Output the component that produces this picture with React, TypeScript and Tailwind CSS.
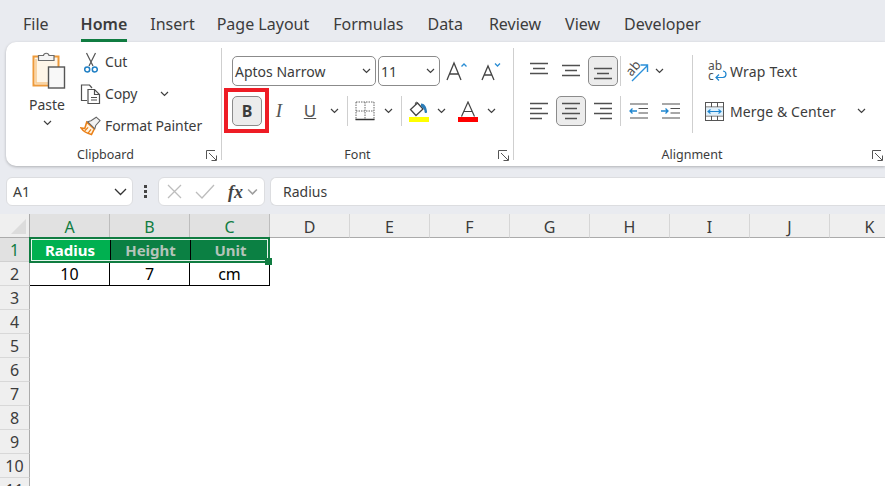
import React from 'react';

const tabs = ['File', 'Home', 'Insert', 'Page Layout', 'Formulas', 'Data', 'Review', 'View', 'Developer'];
const tabGaps: Record<string, string> = {
  File: 'mr-[32px]',
  Home: 'mr-[23px]',
  Insert: 'mr-[22px]',
  Data: 'mr-[26px]',
};
const columns = ['A', 'B', 'C', 'D', 'E', 'F', 'G', 'H', 'I', 'J', 'K'];
const rows = [3, 4, 5, 6, 7, 8, 9, 10, 11];

function Chevron({ className = '' }: { className?: string }) {
  return (
    <svg width="9" height="6" viewBox="0 0 9 6" className={`shrink-0 ${className}`} fill="none" stroke="#3f3f3f" strokeWidth="1.2">
      <path d="M1 1l3.5 3.5L8 1" />
    </svg>
  );
}

function Launcher() {
  return (
    <svg width="11" height="11" viewBox="0 0 11 11" fill="none" stroke="#555" strokeWidth="1">
      <path d="M.5 9V.5H9" />
      <path d="M3 3l7 7M10.5 5.5v5h-5" />
    </svg>
  );
}

function GroupFooter({ label, labelClass, launcherClass }: { label: string; labelClass: string; launcherClass: string }) {
  return (
    <div className="mt-auto grid h-[14px] grid-cols-[1fr_auto_1fr] items-center text-[12.5px] leading-[14px] text-[#3c3c3c]">
      <span />
      <span className={`pt-[2px] ${labelClass}`}>{label}</span>
      <span className={`flex justify-end pt-[2px] ${launcherClass}`}>
        <Launcher />
      </span>
    </div>
  );
}

function PasteIcon() {
  return (
    <svg width="36" height="40" viewBox="0 0 36 40">
      <rect x="2.5" y="6.5" width="25" height="29" fill="#fff6e8" stroke="#ee9a3a" strokeWidth="2" />
      <path d="M5 9v24h20" fill="none" stroke="#f7c98d" strokeWidth="1.5" />
      <path d="M7.5 10.5V5.5h5c.5-3 5-3 5.5 0h5v5z" fill="#f5f5f5" stroke="#6b6b6b" strokeWidth="1.2" />
      <rect x="17.5" y="17" width="16" height="21" fill="#f8f8f8" stroke="#555" strokeWidth="1.4" />
    </svg>
  );
}

function ScissorsIcon() {
  return (
    <svg width="14" height="21" viewBox="0 0 14 21" fill="none">
      <path d="M2.5 1l6.500 13M11.500 1L5 14" stroke="#555" strokeWidth="1.2" />
      <circle cx="3.2" cy="17.5" r="2.5" stroke="#1f7fc4" strokeWidth="1.5" />
      <circle cx="10.8" cy="17.5" r="2.5" stroke="#1f7fc4" strokeWidth="1.5" />
    </svg>
  );
}

function CopyIcon() {
  return (
    <svg width="21" height="20" viewBox="0 0 21 20" fill="none" stroke="#505050" strokeWidth="1.2">
      <path d="M7 16.500H1.500V1h8l2.500 3" />
      <path d="M8 5.500h6.500l5 5v9H8z" fill="#fff" />
      <path d="M14.500 5.500v5h5M11 13.500h6M11 16h6" />
    </svg>
  );
}

function PainterIcon() {
  return (
    <svg width="22" height="20" viewBox="0 0 22 20" fill="none">
      <path d="M7 6l8 7-3 6C8 18 3 15 1 12l4 .5z" fill="#fff3e0" stroke="#ea7f16" strokeWidth="1.6" />
      <path d="M5 15l3.500-3.500M8.500 17.500l3-4" stroke="#ea7f16" strokeWidth="1.3" />
      <path d="M8 5.500l3.500-1L17 .8l4 3.500-4.500 5.200-1 3.500z" fill="#f2f2f2" stroke="#666" strokeWidth="1.1" />
    </svg>
  );
}

function GrowIcon({ up }: { up: boolean }) {
  return (
    <svg width="22" height="20" viewBox="0 0 22 20" fill="none">
      <path d={up ? 'M1 19L8 2l7 17M3.500 13h9' : 'M3 19L9 5l6 14M5 14h8'} stroke="#444" strokeWidth="1.3" />
      <path d={up ? 'M15.500 5.500L18 3l2.500 2.500' : 'M16 2.500L18.500 5 21 2.500'} stroke="#2a8dd4" strokeWidth="1.3" />
    </svg>
  );
}

function BordersIcon() {
  return (
    <svg width="20" height="20" viewBox="0 0 20 20" fill="none">
      <path d="M1 1h18M1 1v18M19 1v18M10 1v18M1 10h18" stroke="#666" strokeWidth="1" strokeDasharray="1.5 1" />
      <path d="M.5 18.500h19" stroke="#333" strokeWidth="1.5" />
    </svg>
  );
}

function FillIcon() {
  return (
    <div className="flex w-[21px] flex-col items-center">
      <svg width="20" height="16" viewBox="0 0 20 16" fill="none">
        <path d="M8.500 2L1.500 8.500l5.500 6 7-6.500z" fill="#fff" stroke="#444" strokeWidth="1.3" />
        <path d="M8.500 2C7.500 .5 6 1 6.500 4" stroke="#444" strokeWidth="1" />
        <path d="M12 2.500c3.500 0 5.500 3 6 8 .3 2-2.500 2-2.500 0 0-1.500-.5-3-3.500-5z" fill="#2b7cb8" />
      </svg>
      <span className="h-[5px] w-[20px] bg-[#ffff00]" />
    </div>
  );
}

function ColorAIcon() {
  return (
    <div className="flex w-[20px] flex-col items-center">
      <svg width="16" height="16" viewBox="0 0 16 16" fill="none">
        <path d="M1.500 15.500L8 1l6.500 14.500M4 10.500h8" stroke="#444" strokeWidth="1.2" />
      </svg>
      <span className="h-[5px] w-[20px] bg-[#ff0000]" />
    </div>
  );
}

function LinesIcon({ align }: { align: 'left' | 'center' | 'right' | 'top' | 'middle' | 'bottom' }) {
  const d = {
    left: 'M0 1.500h18M0 6.500h12M0 11.500h18M0 16.500h12',
    center: 'M0 1.500h18M3 6.500h12M0 11.500h18M3 16.500h12',
    right: 'M0 1.500h18M6 6.500h12M0 11.500h18M6 16.500h12',
    top: 'M0 1.500h18M3 6.500h12M0 11.500h18',
    middle: 'M0 3.500h18M3 8.500h12M0 13.500h18',
    bottom: 'M0 6.500h18M3 11.500h12M0 16.500h18',
  }[align];
  return (
    <svg width="18" height="18" viewBox="0 0 18 18" fill="none" stroke="#505050" strokeWidth="1.3">
      <path d={d} />
    </svg>
  );
}

function OrientationIcon() {
  return (
    <svg width="24" height="24" viewBox="0 0 24 24" fill="none">
      <text x="1" y="14" transform="rotate(-50 8 10)" fontSize="13" fill="#505050" fontFamily="'Noto Sans', sans-serif">ab</text>
      <path d="M7 22L22 7M15.500 6H22.500v7" stroke="#2b90d9" strokeWidth="1.4" />
    </svg>
  );
}

function IndentIcon({ increase }: { increase: boolean }) {
  return (
    <svg width="19" height="16" viewBox="0 0 19 16" fill="none">
      <path d="M1 1h18M9.500 5.500H19M9.500 10H19M1 15h18" stroke="#505050" strokeWidth="1.2" />
      <path d={increase ? 'M0 8h7M4.500 5.500L7 8l-2.500 2.500' : 'M1 8h7M3.500 5.500L1 8l2.500 2.500'} stroke="#1f86d0" strokeWidth="1.3" />
    </svg>
  );
}

function WrapIcon() {
  return (
    <div className="relative flex h-[20px] w-[19px] flex-col text-[12px] text-[#505050]">
      <span className="h-[10px] leading-[10px]">ab</span>
      <span className="h-[10px] leading-[10px]">c</span>
      <svg className="absolute bottom-0 right-0" width="13" height="11" viewBox="0 0 13 11" fill="none" stroke="#1f86d0" strokeWidth="1.2">
        <path d="M9 1c4 .5 4 6 0 6.500H2M5 4.500L2 7.500l3 3" />
      </svg>
    </div>
  );
}

function MergeIcon() {
  return (
    <svg width="19" height="19" viewBox="0 0 19 19" fill="none">
      <rect x=".5" y=".5" width="18" height="18" fill="#fff" stroke="#555" />
      <path d="M.5 5h18M.5 14h18M6.500 .5V5M12.500 .5V5M6.500 14v4.500M12.500 14v4.500" stroke="#555" />
      <rect x="1" y="5.500" width="17" height="8" fill="#dff0fb" />
      <path d="M3 9.500h13M5.500 7.500l-2.500 2 2.500 2M13.500 7.500l2.500 2-2.500 2" stroke="#1f86d0" strokeWidth="1.1" />
    </svg>
  );
}

function ActiveBox({ children }: { children: React.ReactNode }) {
  return (
    <span className="flex h-[30px] w-[30px] items-center justify-center rounded-[5px] border border-[#8b8b8b] bg-[#ececec]">
      {children}
    </span>
  );
}

function Sep() {
  return <span className="block h-[30px] w-px shrink-0 bg-[#cfcfcf]" />;
}

function Clipboard() {
  const items = [
    { icon: <ScissorsIcon />, label: 'Cut' },
    { icon: <CopyIcon />, label: 'Copy', chevron: true },
    { icon: <PainterIcon />, label: 'Format Painter' },
  ];
  return (
    <section className="flex h-full w-[216px] shrink-0 flex-col border-r border-[#cfcfcf]">
      <div className="flex pl-[21px]">
        <div className="flex w-[40px] flex-col items-center pt-[2px]">
          <span className="ml-[4px]"><PasteIcon /></span>
          <span className="mt-[5px] text-[14px] leading-[20px]">Paste</span>
          <Chevron className="mt-[5px]" />
        </div>
        <div className="ml-[13px] flex flex-col gap-[4px]">
          {items.map((it) => (
            <div key={it.label} className="flex h-[28px] items-center">
              <span className="flex w-[21px] justify-center">{it.icon}</span>
              <span className="ml-[4px] pb-[2px] text-[14px] tracking-[-0.1px]">{it.label}</span>
              {it.chevron && <Chevron className="ml-[23px]" />}
            </div>
          ))}
        </div>
      </div>
      <GroupFooter label="Clipboard" labelClass="pr-[16px]" launcherClass="pr-[4px]" />
    </section>
  );
}

function FontGroup() {
  return (
    <section className="flex h-full w-[292px] shrink-0 flex-col border-r border-[#cfcfcf] pl-[10px] pt-[8px]">
      <div className="flex h-[30px] items-center">
        <div className="flex h-[30px] w-[144px] items-center justify-between rounded-[5px] border border-[#8b8b8b] pl-[2px] pr-[4px] text-[14px]">
          <span>Aptos Narrow</span>
          <Chevron />
        </div>
        <div className="ml-[2px] flex h-[30px] w-[62px] items-center justify-between rounded-[5px] border border-[#8b8b8b] pl-[2px] pr-[4px] text-[14px]">
          <span>11</span>
          <Chevron />
        </div>
        <span className="ml-[6px] flex w-[22px] justify-center"><GrowIcon up /></span>
        <span className="ml-[11px] flex w-[22px] justify-center"><GrowIcon up={false} /></span>
      </div>
      <div className="relative mt-[10px] flex h-[30px] items-center">
        <ActiveBox>
          <span className="text-[16px] font-bold text-[#3c3c3c]">B</span>
        </ActiveBox>
        <span className="w-[34px] text-center font-['Liberation_Serif',serif] text-[19px] italic text-[#555]">I</span>
        <span className="w-[28px] text-center text-[17px] leading-[20px] text-[#555] underline">U</span>
        <span className="flex w-[20px] justify-center"><Chevron /></span>
        <span className="ml-[3px]"><Sep /></span>
        <span className="ml-[7px]"><BordersIcon /></span>
        <span className="ml-[6px] flex w-[14px] justify-center"><Chevron /></span>
        <span className="ml-[6px]"><Sep /></span>
        <span className="ml-[6px]"><FillIcon /></span>
        <span className="ml-[5px] flex w-[14px] justify-center"><Chevron /></span>
        <span className="ml-[10px]"><ColorAIcon /></span>
        <span className="ml-[6px] flex w-[14px] justify-center"><Chevron /></span>
        <span className="pointer-events-none absolute left-[-8px] top-[-8px] h-[45px] w-[45px] border-[4px] border-[#ee1c25]" />
      </div>
      <GroupFooter label="Font" labelClass="pr-[30px]" launcherClass="pr-[4px]" />
    </section>
  );
}

function AlignCell({ children }: { children: React.ReactNode }) {
  return <span className="flex h-[30px] w-[32px] shrink-0 items-center justify-center">{children}</span>;
}

function Alignment() {
  return (
    <section className="flex h-full min-w-0 flex-1 flex-col pl-[9px] pt-[8px]">
      <div className="flex">
        <div className="flex flex-col gap-[10px]">
          <div className="flex h-[30px] items-center">
            <AlignCell><LinesIcon align="top" /></AlignCell>
            <AlignCell><LinesIcon align="middle" /></AlignCell>
            <AlignCell><ActiveBox><LinesIcon align="bottom" /></ActiveBox></AlignCell>
            <span className="ml-px"><Sep /></span>
            <AlignCell><OrientationIcon /></AlignCell>
            <Chevron className="ml-[2px]" />
          </div>
          <div className="flex h-[30px] items-center">
            <AlignCell><LinesIcon align="left" /></AlignCell>
            <AlignCell><ActiveBox><LinesIcon align="center" /></ActiveBox></AlignCell>
            <AlignCell><LinesIcon align="right" /></AlignCell>
            <span className="ml-px"><Sep /></span>
            <AlignCell><span className="ml-[2px]"><IndentIcon increase={false} /></span></AlignCell>
            <AlignCell><span className="ml-[2px]"><IndentIcon increase /></span></AlignCell>
          </div>
        </div>
        <span className="ml-[7px] mt-[-1px] h-[78px] w-px bg-[#cfcfcf]" />
        <div className="ml-[12px] flex flex-col gap-[10px] text-[14px]">
          <div className="flex h-[30px] items-center">
            <span className="ml-[3px]"><WrapIcon /></span>
            <span className="ml-[3px] tracking-[0.2px]">Wrap Text</span>
          </div>
          <div className="flex h-[30px] items-center">
            <MergeIcon />
            <span className="ml-[6px] tracking-[0.1px]">Merge &amp; Center</span>
            <Chevron className="ml-[21px]" />
          </div>
        </div>
      </div>
      <GroupFooter label="Alignment" labelClass="pr-[24px]" launcherClass="pr-[2px]" />
    </section>
  );
}

function FormulaBar() {
  return (
    <div className="mt-[11px] flex h-[29px] pl-[6px] text-[14px]">
      <div className="flex w-[127px] items-center justify-between rounded-[6px] border border-[#dcdde0] bg-white pl-[6px] pr-[5px]">
        <span className="pb-[1px]">A1</span>
        <svg width="13" height="8" viewBox="0 0 13 8" fill="none" stroke="#333" strokeWidth="1.3"><path d="M1 1l5.500 5.500L12 1" /></svg>
      </div>
      <div className="flex w-[25px] flex-col items-center justify-center gap-[2px]">
        <span className="h-[3px] w-[3px] bg-[#444]" />
        <span className="h-[3px] w-[3px] bg-[#444]" />
        <span className="h-[3px] w-[3px] bg-[#444]" />
      </div>
      <div className="flex w-[107px] items-center rounded-[6px] border border-[#dcdde0] bg-white">
        <svg className="ml-[8px]" width="15" height="15" viewBox="0 0 15 15" fill="none" stroke="#bdbdbd" strokeWidth="1.3"><path d="M1 1l13 13M14 1L1 14" /></svg>
        <svg className="ml-[13px]" width="20" height="15" viewBox="0 0 20 15" fill="none" stroke="#bdbdbd" strokeWidth="1.3"><path d="M1 8l6 6L19 1" /></svg>
        <span className="ml-[13px] font-['Liberation_Serif',serif] text-[18px] font-bold italic leading-none text-[#444]">fx</span>
        <Chevron className="ml-[5px] scale-125 opacity-50" />
      </div>
      <div className="ml-[5px] flex flex-1 items-center rounded-l-[6px] border border-r-0 border-[#dcdde0] bg-white pb-[1px] pl-[12px]">
        Radius
      </div>
    </div>
  );
}

function Sheet() {
  return (
    <div className="relative mt-[8px] text-[16px] text-[#3c3c3c]">
      <div className="grid grid-cols-[30px_repeat(11,80px)] grid-rows-[repeat(12,24px)]">
        <div className="relative border-b border-r border-[#ababab] bg-[#efefef]">
          <span className="absolute bottom-[3px] right-[3px] h-0 w-0 border-b-[15px] border-l-[15px] border-b-[#dcdcdc] border-l-transparent" />
        </div>
        {columns.map((c, i) => (
          <div
            key={c}
            className={
              i < 3
                ? 'flex items-center justify-center border-b border-r border-b-[#ababab] border-r-[#bdbdbd] bg-[#e1e1e1] pt-[2px] text-[#107c41]'
                : 'flex items-center justify-center border-b border-r border-b-[#ababab] border-r-[#d6d6d6] bg-[#efefef] pt-[2px]'
            }
          >
            {c}
          </div>
        ))}

        <div className="flex items-center justify-center border-b border-r border-b-[#d0d0d0] border-r-[#ababab] bg-[#e1e1e1] text-[#107c41]">1</div>
        <div className="flex items-center justify-center bg-[#00b050] text-[15px] font-bold text-white">Radius</div>
        <div className="flex items-center justify-center border-l border-black bg-[#0b8043] text-[15px] font-bold text-[#b4c4ba]">Height</div>
        <div className="flex items-center justify-center border-l border-black bg-[#0b8043] text-[15px] font-bold text-[#b4c4ba]">Unit</div>
        <div className="col-span-8 bg-white" />

        <div className="flex items-center justify-center border-b border-r border-b-[#d8d8d8] border-r-[#ababab] bg-[#efefef]">2</div>
        <div className="flex items-center justify-center border-b border-r border-black bg-white text-black">10</div>
        <div className="flex items-center justify-center border-b border-r border-black bg-white text-black">7</div>
        <div className="flex items-center justify-center border-b border-r border-black bg-white text-black">cm</div>
        <div className="col-span-8 bg-white" />

        {rows.map((r) => (
          <React.Fragment key={r}>
            <div className="flex items-center justify-center border-b border-r border-b-[#d8d8d8] border-r-[#ababab] bg-[#efefef]">{r}</div>
            <div className="col-span-11 bg-white" />
          </React.Fragment>
        ))}
      </div>
      <div className="pointer-events-none absolute left-[29px] top-[23px] h-[26px] w-[241px] border-2 border-[#107c41]">
        <div className="h-full w-full border border-white/90" />
        <span className="absolute bottom-[-4px] right-[-4px] h-[7px] w-[7px] bg-[#107c41]" />
      </div>
    </div>
  );
}

export default function App() {
  return (
    <div className="h-[486px] w-[885px] overflow-hidden bg-[#e9ebf0] font-['Noto_Sans',sans-serif] text-[#3c3c3c]">
      <nav className="flex h-[42px] items-end pl-[23px] text-[16px]">
        {tabs.map((t) => (
          <div key={t} className={`relative h-[38px] pt-[6px] leading-[28px] ${tabGaps[t] ?? 'mr-[24px]'}`}>
            <span className={t === 'Home' ? 'font-semibold' : ''}>{t}</span>
            {t === 'Home' && <span className="absolute bottom-0 left-0 right-0 h-[3px] bg-[#107c41]" />}
          </div>
        ))}
      </nav>
      <div className="ml-[6px] flex h-[124px] rounded-l-[10px] bg-white py-[6px] shadow-[0_1px_3px_rgba(0,0,0,0.25)]">
        <Clipboard />
        <FontGroup />
        <Alignment />
      </div>
      <FormulaBar />
      <Sheet />
    </div>
  );
}
